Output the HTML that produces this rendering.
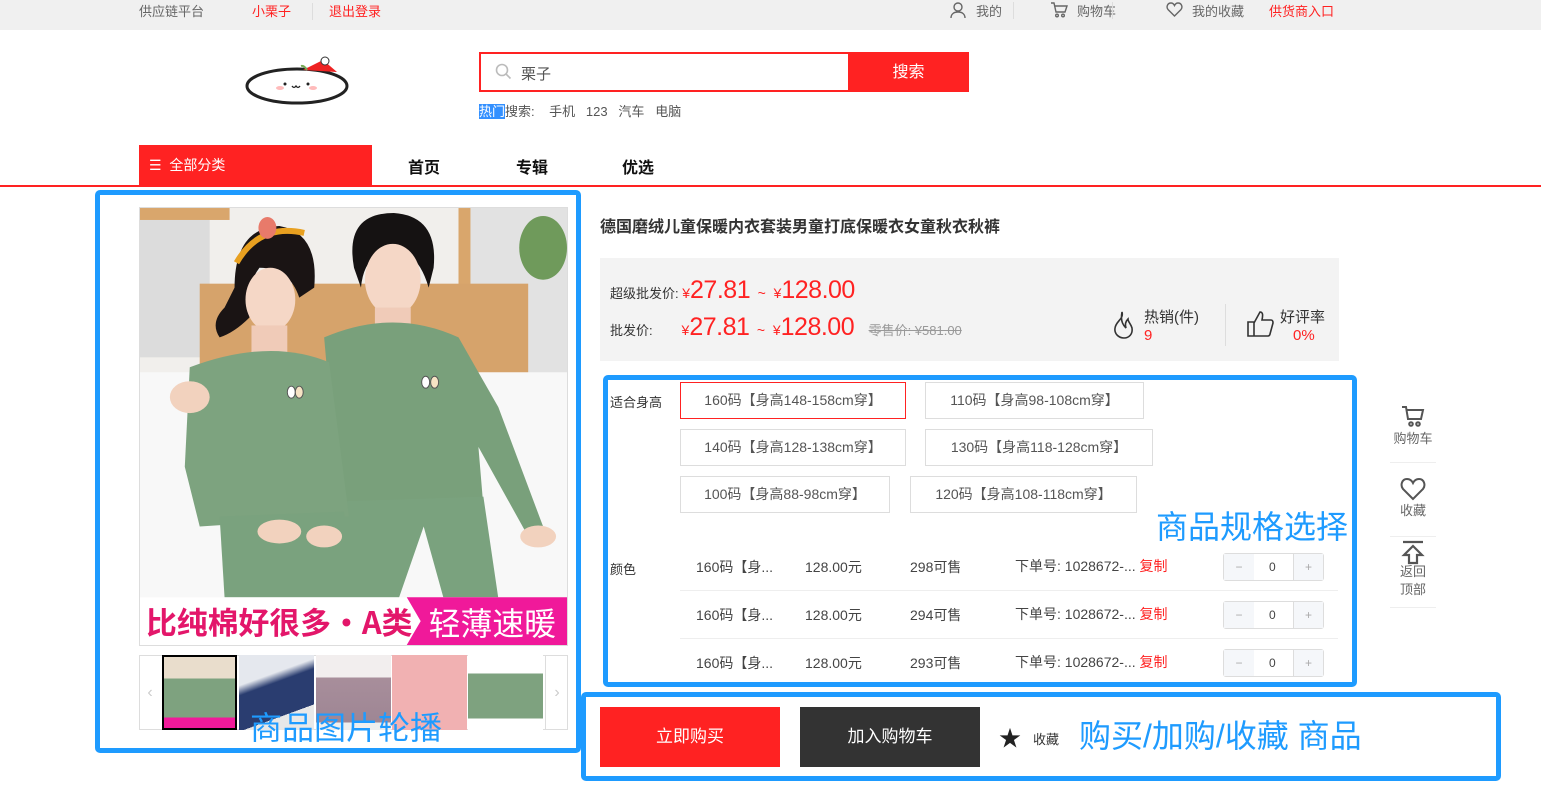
<!DOCTYPE html>
<html><head><meta charset="utf-8"><style>
*{margin:0;padding:0;box-sizing:border-box}
body{width:1541px;height:805px;background:#fff;font-family:"Liberation Sans","Noto Sans CJK SC",sans-serif;position:relative;overflow:hidden;color:#333}
.a{position:absolute;white-space:nowrap}
.top{position:absolute;left:0;top:0;width:1541px;height:30px;background:#f0f0f0;font-size:13px;color:#666}
.sz{position:absolute;height:37px;border:1px solid #ddd;font-size:14px;color:#555;line-height:35px;text-align:center;white-space:nowrap}
.row{position:absolute;left:680px;width:658px;height:48px;border-bottom:1px solid #eee;font-size:14px;color:#444}
.row span{position:absolute;top:14px;white-space:nowrap}
.qty{position:absolute;left:543px;top:0;width:101px;height:28px;border:1px solid #ddd;border-radius:3px;background:#fff;font-size:12px}
.qty b{position:absolute;top:0;width:30px;height:26px;background:#f5f7fa;color:#aaa;font-weight:normal;text-align:center;line-height:26px}
.blue{position:absolute;border:5px solid #1e9bff;border-radius:5px}
.side{position:absolute;left:1390px;width:46px;text-align:center;font-size:13px;color:#666}
.p{color:#f22;font-size:25px;letter-spacing:-0.5px}
</style></head><body>
<div class="top">
 <span class="a" style="left:139px;top:1px">供应链平台</span>
 <span class="a" style="left:252px;top:1px;color:#f22">小栗子</span>
 <span class="a" style="left:312px;top:3px;width:1px;height:17px;background:#ddd"></span>
 <span class="a" style="left:329px;top:1px;color:#f22">退出登录</span>
 <svg class="a" style="left:949px;top:1px" width="18" height="18" viewBox="0 0 18 18" fill="none" stroke="#666" stroke-width="1.4"><circle cx="9" cy="6" r="4"/><path d="M2 17c0-4 3-6 7-6s7 2 7 6"/></svg>
 <span class="a" style="left:976px;top:1px">我的</span>
 <span class="a" style="left:1013px;top:2px;width:1px;height:17px;background:#ddd"></span>
 <svg class="a" style="left:1050px;top:2px" width="18" height="16" viewBox="0 0 18 16" fill="none" stroke="#666" stroke-width="1.4"><path d="M1 1h3l2 9h9l2-6H5"/><circle cx="7" cy="13.5" r="1.3"/><circle cx="13" cy="13.5" r="1.3"/></svg>
 <span class="a" style="left:1077px;top:1px">购物车</span>
 <span class="a" style="left:1112px;top:2px;width:1px;height:17px;background:#ddd"></span>
 <svg class="a" style="left:1166px;top:2px" width="17" height="15" viewBox="0 0 17 15" fill="none" stroke="#666" stroke-width="1.4"><path d="M8.5 14L2 7.5C0 5 1.5 1 5 1c2 0 3 1.5 3.5 2.5C9 2.5 10 1 12 1c3.5 0 5 4 3 6.5z"/></svg>
 <span class="a" style="left:1192px;top:1px">我的收藏</span>
 <span class="a" style="left:1269px;top:1px;color:#f22">供货商入口</span>
</div>
<!-- logo -->
<svg class="a" style="left:245px;top:56px" width="110" height="50" viewBox="0 0 110 50">
 <ellipse cx="52" cy="30" rx="50" ry="17" fill="#fff" stroke="#222" stroke-width="3"/>
 <path d="M58 14 L78 4 L92 16 Z" fill="#e22"/><circle cx="80" cy="5" r="4" fill="#fff" stroke="#333"/>
 <path d="M62 14q-3-5-6-4" stroke="#7a5" stroke-width="2" fill="none"/>
 <circle cx="40" cy="28" r="1.5" fill="#222"/><circle cx="63" cy="28" r="1.5" fill="#222"/>
 <path d="M47 30q2 3 4 0q2 3 4 0" stroke="#222" fill="none" stroke-width="1.3"/>
 <ellipse cx="35" cy="32" rx="4" ry="2" fill="#fbb"/><ellipse cx="68" cy="32" rx="4" ry="2" fill="#fbb"/>
</svg>
<div class="a" style="left:479px;top:52px;width:370px;height:40px;border:2px solid #f22;border-right:none"></div>
<svg class="a" style="left:495px;top:63px" width="17" height="17" viewBox="0 0 17 17" fill="none" stroke="#bbb" stroke-width="1.6"><circle cx="7" cy="7" r="5.5"/><path d="M11 11l4.5 4.5"/></svg>
<span class="a" style="left:521px;top:63px;font-size:15px;color:#555">栗子</span>
<div class="a" style="left:848px;top:52px;width:121px;height:40px;background:#f22;color:#fff;font-size:16px;text-align:center;line-height:42px">搜索</div>
<span class="a" style="left:479px;top:101px;font-size:13px;color:#555"><span style="background:#3390ff;color:#fff">热门</span>搜索: &nbsp; &nbsp;手机 &nbsp; 123 &nbsp; 汽车 &nbsp; 电脑</span>
<!-- nav -->
<div class="a" style="left:139px;top:145px;width:233px;height:40px;background:#f22;color:#fff;font-size:14px;line-height:40px;padding-left:10px">☰&nbsp; 全部分类</div>
<span class="a" style="left:408px;top:154px;font-size:16px;font-weight:bold;color:#111">首页</span>
<span class="a" style="left:516px;top:154px;font-size:16px;font-weight:bold;color:#111">专辑</span>
<span class="a" style="left:622px;top:154px;font-size:16px;font-weight:bold;color:#111">优选</span>
<div class="a" style="left:0;top:185px;width:1541px;height:2px;background:#f22"></div>
<!-- photo -->
<svg class="a" style="left:139px;top:207px;border:1px solid #ddd" width="429" height="439" viewBox="0 0 429 439">
 <rect width="429" height="439" fill="#f1efec"/>
 <rect x="0" y="0" width="70" height="150" fill="#dcdcdc"/>
 <rect x="0" y="0" width="90" height="12" fill="#d9a66c"/>
 <rect x="330" y="0" width="99" height="180" fill="#e2e2e2"/>
 <rect x="320" y="0" width="12" height="175" fill="#d9a66c"/>
 <ellipse cx="405" cy="40" rx="24" ry="32" fill="#6f9a5b"/>
 <rect x="60" y="76" width="330" height="104" fill="#d6a36b"/>
 <rect x="0" y="165" width="429" height="226" fill="#f8f8f8"/>
 <!-- girl hair/head -->
 <path d="M95 80 Q95 20 140 18 Q180 25 175 80 L160 90 Q150 60 120 60 Q105 80 110 110 Q95 125 80 130 Q70 115 85 100Z" fill="#1a1414"/>
 <ellipse cx="131" cy="92" rx="25" ry="32" fill="#f5d7c6"/>
 <path d="M97 55 Q120 15 165 25" stroke="#e8a020" stroke-width="6" fill="none"/>
 <ellipse cx="128" cy="20" rx="9" ry="11" fill="#e87a6a"/>
 <!-- boy hair/head -->
 <path d="M215 60 Q205 5 255 5 Q300 8 295 60 L290 80 Q280 45 255 40 Q225 45 222 80Z" fill="#151212"/>
 <ellipse cx="254" cy="72" rx="28" ry="36" fill="#f5d7c6"/>
 <rect x="236" y="100" width="36" height="20" fill="#f0cbb8"/>
 <rect x="112" y="118" width="36" height="30" fill="#f0cbb8"/>
 <!-- boy shirt -->
 <path d="M185 130 Q255 100 320 130 L360 200 L405 320 L390 330 L340 240 L345 300 L200 300 Z" fill="#79a07b"/>
 <!-- boy pants -->
 <path d="M195 295 L345 290 L360 392 L305 392 L285 320 L260 392 L200 392Z" fill="#7aa27e"/>
 <ellipse cx="400" cy="330" rx="18" ry="11" fill="#f2d2be"/>
 <!-- girl shirt -->
 <path d="M50 160 Q130 130 190 155 L210 310 L60 320 L45 260Z" fill="#7da37f"/>
 <ellipse cx="50" cy="190" rx="20" ry="16" fill="#f2d2be"/>
 <!-- girl pants -->
 <path d="M80 310 L205 305 L210 392 L85 392Z" fill="#7aa27e"/>
 <ellipse cx="140" cy="325" rx="22" ry="12" fill="#f2d2be"/>
 <ellipse cx="185" cy="330" rx="18" ry="11" fill="#f2d2be"/>
 <ellipse cx="152" cy="185" rx="4" ry="6" fill="#fff" stroke="#555"/><ellipse cx="160" cy="185" rx="4" ry="6" fill="#f6e3c4" stroke="#555"/>
 <ellipse cx="287" cy="175" rx="4" ry="6" fill="#fff" stroke="#555"/><ellipse cx="296" cy="175" rx="4" ry="6" fill="#f6e3c4" stroke="#555"/>
 <rect x="0" y="391" width="429" height="48" fill="#fff"/>
 <path d="M268 391 L429 391 L429 439 L268 439 L282 415Z" fill="#f0199a"/>
 <text x="6" y="428" font-size="31" font-weight="bold" fill="#e3166a" font-family="Noto Sans CJK SC">比纯棉好很多·A类</text>
 <text x="290" y="429" font-size="32" fill="#fff" font-family="Noto Sans CJK SC">轻薄速暖</text>
</svg>
<!-- thumbs -->
<div class="a" style="left:139px;top:655px;width:429px;height:75px;border:1px solid #ddd"></div>
<div class="a" style="left:139px;top:655px;width:22px;height:75px;color:#ccc;font-size:16px;line-height:75px;text-align:center">‹</div>
<div class="a" style="left:545px;top:655px;width:23px;height:75px;border-left:1px solid #ddd;color:#ccc;font-size:16px;line-height:75px;text-align:center">›</div>
<div class="a" style="left:162px;top:655px;width:75px;height:75px;border:2px solid #000;background:linear-gradient(#e9ddcc 30%,#7ea27f 30%,#7ea27f 85%,#f0199a 85%)"></div>
<div class="a" style="left:239px;top:655px;width:75px;height:75px;background:linear-gradient(160deg,#e5e8ee 30%,#2a3d70 40%,#2a3d70 75%,#e8e8e8 75%)"></div>
<div class="a" style="left:316px;top:655px;width:75px;height:75px;background:linear-gradient(#f2eeee 30%,#a88e9b 30%,#9e8694 90%,#eee 90%)"></div>
<div class="a" style="left:392px;top:655px;width:75px;height:75px;background:#f1b1b2"></div>
<div class="a" style="left:468px;top:655px;width:75px;height:75px;background:linear-gradient(#fff 25%,#7ea27f 25%,#7ea27f 85%,#fff 85%)"></div>
<span class="a" style="left:250px;top:708px;font-size:32px;color:#1e9bff;line-height:40px">商品图片轮播</span>
<div class="blue" style="left:95px;top:190px;width:486px;height:563px"></div>
<!-- title -->
<span class="a" style="left:600px;top:213px;font-size:16px;font-weight:bold;color:#333">德国磨绒儿童保暖内衣套装男童打底保暖衣女童秋衣秋裤</span>
<div class="a" style="left:600px;top:258px;width:739px;height:103px;background:#f3f3f3"></div>
<span class="a" style="left:610px;top:276px;font-size:13px;color:#333">超级批发价: <span style="color:#f22;font-size:14px">¥</span><span class="p">27.81</span> <span style="color:#f22;font-size:14px">&nbsp;~&nbsp; ¥</span><span class="p">128.00</span></span>
<span class="a" style="left:610px;top:313px;font-size:13px;color:#333">批发价: &nbsp; &nbsp; &nbsp; &nbsp;<span style="color:#f22;font-size:14px">¥</span><span class="p">27.81</span> <span style="color:#f22;font-size:14px">&nbsp;~&nbsp; ¥</span><span class="p">128.00</span> &nbsp; &nbsp;<span style="color:#999;font-size:13px;text-decoration:line-through">零售价: ¥581.00</span></span>
<svg class="a" style="left:1112px;top:311px" width="24" height="28" viewBox="0 0 24 28" fill="none" stroke="#333" stroke-width="1.6"><path d="M10 1C12 8 4 10 3 17c-1 6 4 10 9 10s9-4 8-10c-1-4-4-6-4-9-3 3-3 6-2 9-2-2-6-6-4-16z"/></svg>
<span class="a" style="left:1144px;top:306px;font-size:15px;color:#333">热销(件)</span>
<span class="a" style="left:1144px;top:327px;font-size:15px;color:#f22">9</span>
<div class="a" style="left:1225px;top:304px;width:1px;height:42px;background:#ddd"></div>
<svg class="a" style="left:1246px;top:310px" width="28" height="28" viewBox="0 0 28 28" fill="none" stroke="#333" stroke-width="1.6"><path d="M2 12h6v14H2zM8 13l6-11c3 0 3 3 2 8h9c2 0 2 2 2 3l-3 11c0 1-1 2-2 2H8"/></svg>
<span class="a" style="left:1280px;top:306px;font-size:15px;color:#333">好评率</span>
<span class="a" style="left:1293px;top:327px;font-size:15px;color:#f22">0%</span>
<!-- sizes -->
<span class="a" style="left:610px;top:392px;font-size:13px">适合身高</span>
<div class="sz" style="left:680px;top:382px;width:226px;border-color:#f22">160码【身高148-158cm穿】</div>
<div class="sz" style="left:925px;top:382px;width:219px">110码【身高98-108cm穿】</div>
<div class="sz" style="left:680px;top:429px;width:226px">140码【身高128-138cm穿】</div>
<div class="sz" style="left:925px;top:429px;width:228px">130码【身高118-128cm穿】</div>
<div class="sz" style="left:680px;top:476px;width:210px">100码【身高88-98cm穿】</div>
<div class="sz" style="left:910px;top:476px;width:227px">120码【身高108-118cm穿】</div>
<span class="a" style="left:1156px;top:507px;font-size:32px;color:#1e9bff;line-height:40px">商品规格选择</span>
<span class="a" style="left:610px;top:559px;font-size:13px">颜色</span>
<div class="row" style="top:543px"><span style="left:16px">160码【身...</span><span style="left:125px">128.00元</span><span style="left:230px">298可售</span><span style="left:335px;top:13px">下单号: 1028672-... <span style="position:static;color:#f22">复制</span></span><div class="qty" style="top:10px"><b style="left:0">−</b><span style="left:45px;top:6px">0</span><b style="right:0;border-left:1px solid #ddd">+</b></div></div>
<div class="row" style="top:591px"><span style="left:16px">160码【身...</span><span style="left:125px">128.00元</span><span style="left:230px">294可售</span><span style="left:335px;top:13px">下单号: 1028672-... <span style="position:static;color:#f22">复制</span></span><div class="qty" style="top:10px"><b style="left:0">−</b><span style="left:45px;top:6px">0</span><b style="right:0;border-left:1px solid #ddd">+</b></div></div>
<div class="row" style="top:639px;border:none"><span style="left:16px">160码【身...</span><span style="left:125px">128.00元</span><span style="left:230px">293可售</span><span style="left:335px;top:13px">下单号: 1028672-... <span style="position:static;color:#f22">复制</span></span><div class="qty" style="top:10px"><b style="left:0">−</b><span style="left:45px;top:6px">0</span><b style="right:0;border-left:1px solid #ddd">+</b></div></div>
<div class="blue" style="left:603px;top:375px;width:754px;height:312px"></div>
<!-- side -->
<div class="side" style="top:405px;height:58px;border-bottom:1px solid #eee"><svg width="26" height="24" viewBox="0 0 26 24" fill="none" stroke="#555" stroke-width="2"><path d="M2 2h4l2 12h13l2-9H7"/><circle cx="11" cy="19" r="1.8"/><circle cx="18" cy="19" r="1.8"/></svg><div style="margin-top:-4px">购物车</div></div>
<div class="side" style="top:477px;height:60px;border-bottom:1px solid #eee"><svg width="26" height="24" viewBox="0 0 26 24" fill="none" stroke="#555" stroke-width="2"><path d="M13 22L3 12C0 8 2 2 7 2c3 0 5 2 6 4 1-2 3-4 6-4 5 0 7 6 4 10z"/></svg><div style="margin-top:-4px">收藏</div></div>
<div class="side" style="top:540px;height:68px;border-bottom:1px solid #eee"><svg width="26" height="26" viewBox="0 0 26 26" fill="none" stroke="#555" stroke-width="2.2"><path d="M3 2h20M13 6l-9 9h5v8h8v-8h5z"/></svg><div style="margin-top:-6px;line-height:18px">返回<br>顶部</div></div>
<!-- buy -->
<div class="a" style="left:600px;top:707px;width:180px;height:60px;background:#f22;color:#fff;font-size:17px;text-align:center;line-height:60px">立即购买</div>
<div class="a" style="left:800px;top:707px;width:180px;height:60px;background:#333;color:#fff;font-size:17px;text-align:center;line-height:60px">加入购物车</div>
<span class="a" style="left:999px;top:721px;font-size:22px;color:#222">★</span>
<span class="a" style="left:1033px;top:729px;font-size:13px;color:#333">收藏</span>
<span class="a" style="left:1079px;top:716px;font-size:32px;color:#1e9bff;line-height:40px">购买/加购/收藏 商品</span>
<div class="blue" style="left:581px;top:692px;width:920px;height:89px"></div>
</body></html>
